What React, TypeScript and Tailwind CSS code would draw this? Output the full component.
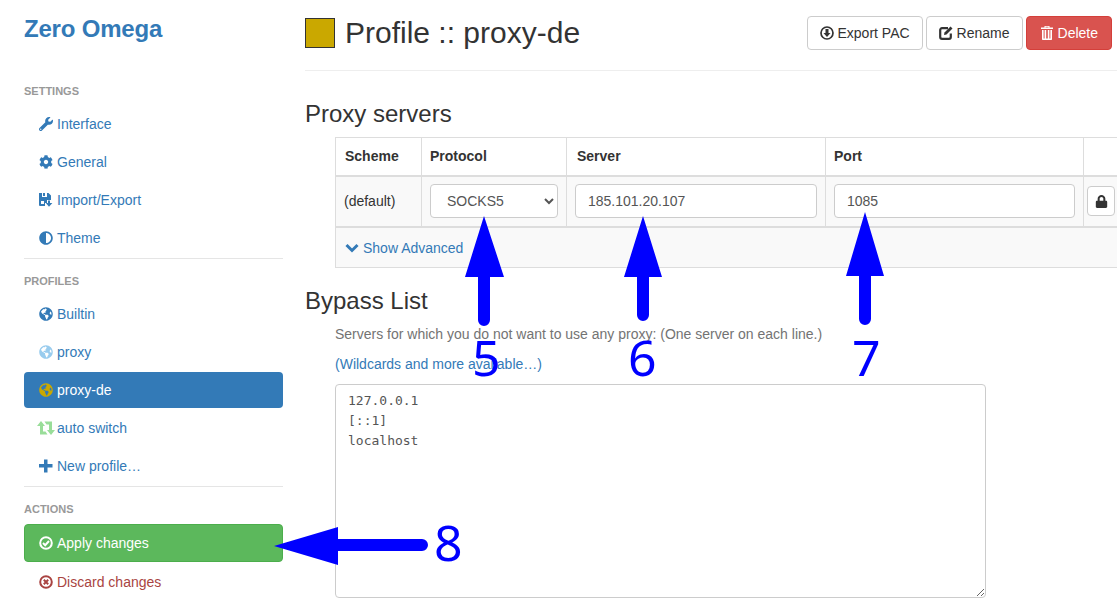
import type { ReactNode } from "react";
import { FaAdjust, FaCog, FaGlobeAmericas, FaLock, FaWrench } from "react-icons/fa";

function FloppySave() {
  return (
    <svg viewBox="0 0 14 14" className="h-[14px] w-[14px] fill-current">
      <path d="M0 0h3v4h5V0h1.5L12 2.5V7H8v3H6v3H1a1 1 0 0 1-1-1V0zM2 8v3h3V8H2z" fillRule="evenodd" />
      <path d="M4 0h2v3H4z" />
      <path d="M9 7.5h2V10h2.4L10 13.8 6.8 10H9V7.5z" />
    </svg>
  );
}

function Retweet() {
  return (
    <svg viewBox="0 0 18 14" className="-ml-[2px] h-[14px] w-[18px] fill-[#99dd99]">
      <path d="M4 0L8 5H6V10.5H8.5L10.5 13.5H3V5H0Z" />
      <path d="M14 14L10 9H12V3.5H9.5L7.5 0.5H15V9H18Z" />
    </svg>
  );
}

function Plus() {
  return (
    <svg viewBox="0 0 14 14" className="h-[14px] w-[14px] fill-current">
      <path d="M5 0.5h3.5V5h5v3.5h-5V13.5H5V8.5H0V5h5z" />
    </svg>
  );
}

function OkCircle() {
  return (
    <svg viewBox="0 0 14 14" className="h-[14px] w-[14px] fill-none stroke-current stroke-2">
      <circle cx="7" cy="7" r="5.8" />
      <path d="M4 7l2.2 2.2L10 5" />
    </svg>
  );
}

function RemoveCircle() {
  return (
    <svg viewBox="0 0 14 14" className="h-[14px] w-[14px] fill-none stroke-current stroke-2">
      <circle cx="7" cy="7" r="5.8" />
      <path d="M4.8 4.8l4.4 4.4M9.2 4.8l-4.4 4.4" />
    </svg>
  );
}

function DownloadCircle() {
  return (
    <svg viewBox="0 0 14 14" className="h-[14px] w-[14px] fill-current">
      <circle cx="7" cy="7" r="6" className="fill-none stroke-current stroke-[1.7]" />
      <path d="M5.5 3h3v4h2L7 11 3.5 7h2z" />
    </svg>
  );
}

function EditIcon() {
  return (
    <svg viewBox="0 0 14 14" className="h-[14px] w-[14px]">
      <path
        d="M9 2.2H3a1.8 1.8 0 0 0-1.8 1.8v7A1.8 1.8 0 0 0 3 12.8h7a1.8 1.8 0 0 0 1.8-1.8V7.5"
        className="fill-none stroke-current stroke-[2.2]"
      />
      <path d="M11.5 0.5l2 2L7.5 8.5 5 9l.5-2.5z" className="fill-current" />
    </svg>
  );
}

function TrashIcon() {
  return (
    <svg viewBox="0 0 14 14" className="h-[14px] w-[14px] fill-current">
      <path d="M4.5 0h5v1.5H13V3H1V1.5h3.5zM5.5 0.8v.7h3v-.7z" />
      <path d="M2 4h1.6v8.5h1V4h1.6v8.5h1.6V4h1.6v8.5h1V4H12v9.3a.7.7 0 0 1-.7.7H2.7a.7.7 0 0 1-.7-.7z" />
    </svg>
  );
}

function NavItem({
  icon,
  label,
  active,
}: {
  icon: ReactNode;
  label: string;
  active?: boolean;
}) {
  return (
    <a
      className={
        active
          ? "flex h-9 items-center rounded bg-[#337ab7] pl-[15px] text-white"
          : "flex h-9 items-center pl-[15px] text-[#337ab7]"
      }
    >
      <span className="flex w-[18px] shrink-0 items-center">{icon}</span>
      {label}
    </a>
  );
}

function Label({ children }: { children: ReactNode }) {
  return (
    <div className="h-[17px] text-[11px] leading-[17px] font-bold text-[#999] uppercase">
      {children}
    </div>
  );
}

function Sidebar() {
  return (
    <aside className="w-[259px] shrink-0">
      <h1 className="mt-[15px] mb-[40px] h-[28px] text-[24px] leading-[28px] font-bold tracking-[-0.2px] text-[#337ab7]">
        Zero Omega
      </h1>
      <Label>Settings</Label>
      <nav className="mt-[6px] flex flex-col gap-[2px]">
        <NavItem icon={<FaWrench size={14} />} label="Interface" />
        <NavItem icon={<FaCog size={14} />} label="General" />
        <NavItem icon={<FloppySave />} label="Import/Export" />
        <NavItem icon={<FaAdjust size={14} />} label="Theme" />
      </nav>
      <hr className="mt-[2px] mb-[14px] border-[#e5e5e5]" />
      <Label>Profiles</Label>
      <nav className="mt-[6px] flex flex-col gap-[2px]">
        <NavItem icon={<FaGlobeAmericas size={14} />} label="Builtin" />
        <NavItem
          icon={<FaGlobeAmericas size={14} className="text-[#99ccee]" />}
          label="proxy"
        />
        <NavItem
          icon={<FaGlobeAmericas size={14} className="text-[#caa800]" />}
          label="proxy-de"
          active
        />
        <NavItem icon={<Retweet />} label="auto switch" />
        <NavItem icon={<Plus />} label="New profile…" />
      </nav>
      <hr className="mt-[2px] mb-[14px] border-[#e5e5e5]" />
      <Label>Actions</Label>
      <button className="mt-[6px] flex h-[38px] w-full items-center rounded border border-[#4cae4c] bg-[#5cb85c] pl-[14px] text-white">
        <span className="flex w-[18px] shrink-0 items-center">
          <OkCircle />
        </span>
        Apply changes
      </button>
      <a className="mt-px flex h-[38px] items-center pl-[15px] text-[#a94442]">
        <span className="flex w-[18px] shrink-0 items-center">
          <RemoveCircle />
        </span>
        Discard changes
      </a>
    </aside>
  );
}

function HeaderButton({
  icon,
  label,
  danger,
}: {
  icon: ReactNode;
  label: string;
  danger?: boolean;
}) {
  return (
    <button
      className={
        danger
          ? "flex h-[34px] items-center gap-1 rounded border border-[#d43f3a] bg-[#d9534f] px-[13px] text-white"
          : "flex h-[34px] items-center gap-1 rounded border border-[#ccc] bg-white px-[12px] text-[#333]"
      }
    >
      {icon}
      {label}
    </button>
  );
}

const inputClass =
  "h-[34px] w-full rounded border border-[#ccc] bg-white px-[12px] text-[14px] text-[#555]";

function ProxyTable() {
  return (
    <table className="ml-[30px] w-[830px] shrink-0 table-fixed border-collapse border border-[#ddd]">
      <thead>
        <tr className="h-[38px] text-left font-bold text-[#333]">
          <th className="w-[86px] border border-b-2 border-[#ddd] pl-[9px]">Scheme</th>
          <th className="w-[145px] border border-b-2 border-[#ddd] pl-[8px]">Protocol</th>
          <th className="w-[259px] border border-b-2 border-[#ddd] pl-[10px]">Server</th>
          <th className="w-[258px] border border-b-2 border-[#ddd] pl-[8px]">Port</th>
          <th className="border border-b-2 border-[#ddd]"></th>
        </tr>
      </thead>
      <tbody className="bg-[#f9f9f9]">
        <tr className="h-[51px]">
          <td className="border border-b-2 border-[#ddd] pl-[8px] text-[#333]">(default)</td>
          <td className="border border-b-2 border-[#ddd] pl-[8px] pr-[8px]">
            <select defaultValue="SOCKS5" className={inputClass}>
              <option>SOCKS5</option>
            </select>
          </td>
          <td className="border border-b-2 border-[#ddd] pl-[8px] pr-[8px]">
            <input defaultValue="185.101.20.107" className={inputClass} />
          </td>
          <td className="border border-b-2 border-[#ddd] pl-[8px] pr-[8px]">
            <input defaultValue="1085" className={inputClass} />
          </td>
          <td className="border border-b-2 border-[#ddd] pl-[3px]">
            <button className="flex h-[30px] w-[28px] items-center justify-center rounded border border-[#ccc] bg-white text-[#333]">
              <FaLock size={13} />
            </button>
          </td>
        </tr>
        <tr className="h-[41px]">
          <td colSpan={5} className="border border-[#ddd] pt-[2px] pl-[9px]">
            <a className="flex items-center gap-[4px] text-[#337ab7]">
              <svg viewBox="0 0 14 10" className="h-[10px] w-[14px] fill-none stroke-current stroke-[3]">
                <path d="M1.5 2L7 7.5 12.5 2" />
              </svg>
              Show Advanced
            </a>
          </td>
        </tr>
      </tbody>
    </table>
  );
}

function Main() {
  return (
    <main className="ml-[22px] min-w-0 flex-1">
      <div className="flex h-[71px] items-start justify-between border-b border-[#eee] pr-[5px] pt-4">
        <div className="flex items-center gap-[10px]">
          <span className="h-[30px] w-[30px] border border-[#333] bg-[#caa800]" />
          <h2 className="text-[30px] leading-[34px] text-[#333]">Profile :: proxy-de</h2>
        </div>
        <div className="flex gap-[3px]">
          <HeaderButton icon={<DownloadCircle />} label="Export PAC" />
          <HeaderButton icon={<EditIcon />} label="Rename" />
          <HeaderButton icon={<TrashIcon />} label="Delete" danger />
        </div>
      </div>
      <h3 className="mt-[30px] mb-[10px] h-[26px] text-[24px] leading-[26px] text-[#333]">
        Proxy servers
      </h3>
      <ProxyTable />
      <h3 className="mt-[20px] mb-[10px] h-[26px] text-[24px] leading-[26px] text-[#333]">
        Bypass List
      </h3>
      <div className="pl-[30px]">
        <p className="text-[#737373]">
          Servers for which you do not want to use any proxy: (One server on each line.)
        </p>
        <a className="mt-[10px] block text-[#337ab7]">(Wildcards and more available…)</a>
        <textarea
          defaultValue={"127.0.0.1\n[::1]\nlocalhost"}
          className="mt-[10px] block h-[214px] w-[651px] rounded border border-[#ccc] bg-white px-[12px] py-[6px] font-['DejaVu_Sans_Mono',monospace] text-[13px] leading-[20px] text-[#555]"
        />
      </div>
    </main>
  );
}

// the blue annotation arrows drawn over the screenshot
function Annotations() {
  return (
    <>
      <svg className="absolute top-0 left-0 h-[612px] w-[1117px]" viewBox="0 0 1117 612">
        <g fill="#0000ff">
          <path d="M484 216L504 277H490V320a6 6 0 0 1-12 0V277H465Z" />
          <path d="M643 216L662 277H649V315a6 6 0 0 1-12 0V277H624Z" />
          <path d="M865 212L884 276H871V319a6 6 0 0 1-12 0V276H846Z" />
          <path d="M274 546L338 527V539H422a6 6 0 0 1 0 12H338V565Z" />
        </g>
      </svg>
      <span className="absolute top-[323px] left-[472px] font-['Noto_Sans',sans-serif] text-[50px] leading-[68px] text-[#0000ff]">5</span>
      <span className="absolute top-[323px] left-[628px] font-['Noto_Sans',sans-serif] text-[50px] leading-[68px] text-[#0000ff]">6</span>
      <span className="absolute top-[323px] left-[852px] font-['Noto_Sans',sans-serif] text-[50px] leading-[68px] text-[#0000ff]">7</span>
      <span className="absolute top-[508px] left-[434px] font-['Noto_Sans',sans-serif] text-[50px] leading-[68px] text-[#0000ff]">8</span>
    </>
  );
}

export default function App() {
  return (
    <div className="relative flex h-[612px] w-[1117px] overflow-hidden bg-white pl-6 font-['Liberation_Sans',Arial,sans-serif] text-[14px] leading-[20px]">
      <Sidebar />
      <Main />
      <Annotations />
    </div>
  );
}
